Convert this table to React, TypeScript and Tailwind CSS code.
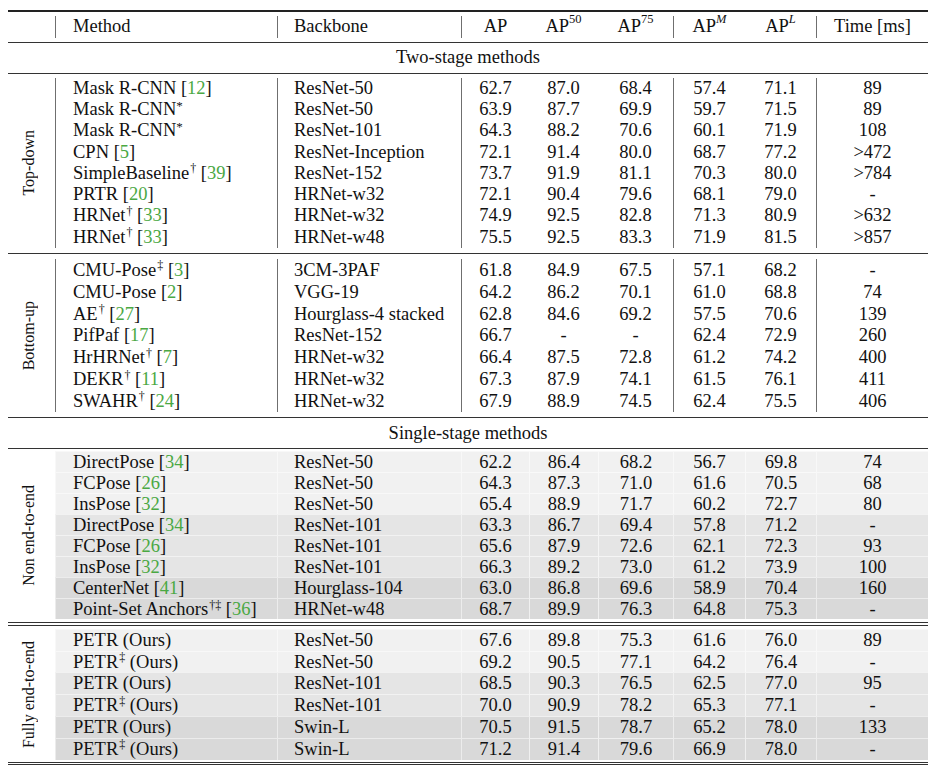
import React from "react";

type Row = {
  m: React.ReactNode;
  b: string;
  v: string[];
  bg?: string;
};

const G = ({ n }: { n: string }) => (
  <span>
    [<span className="text-[#4aa843]">{n}</span>]
  </span>
);

const Sup = ({ c }: { c: string }) => (
  <sup className="text-[12px] relative -top-[5px] leading-none ml-[1px]">{c}</sup>
);

const Star = () => (
  <sup className="text-[13px] relative -top-[4px] leading-none">*</sup>
);

const GRID =
  "grid grid-cols-[222px_184px_68px_69px_75px_72px_71px_112px]";

const VL = "border-l border-[#6f6f6f]";

function DataRow({ r, h }: { r: Row; h: string }) {
  const shaded = !!r.bg;
  const soft = shaded ? "border-l border-white/60" : "";
  const rowSep = shaded ? "border-t border-white/50" : "";
  return (
    <div className={`${GRID} ${h} ${r.bg ?? ""}`}>
      <div className={`${VL} flex items-center pl-[17px] whitespace-nowrap ${rowSep}`}>{r.m}</div>
      <div className={`${VL} flex items-center pl-[16px] whitespace-nowrap ${rowSep}`}>{r.b}</div>
      <div className={`${VL} flex items-center justify-center ${rowSep}`}>{r.v[0]}</div>
      <div className={`${soft} flex items-center justify-center ${rowSep}`}>{r.v[1]}</div>
      <div className={`${soft} flex items-center justify-center ${rowSep}`}>{r.v[2]}</div>
      <div className={`${VL} flex items-center justify-center ${rowSep}`}>{r.v[3]}</div>
      <div className={`${soft} flex items-center justify-center ${rowSep}`}>{r.v[4]}</div>
      <div className={`${VL} flex items-center justify-center ${rowSep}`}>{r.v[5]}</div>
    </div>
  );
}

function Block({
  label,
  rows,
  h,
  pad,
}: {
  label: string;
  rows: Row[];
  h: string;
  pad: string;
}) {
  return (
    <div className={`flex ${pad}`}>
      <div className="w-[47px] flex items-center justify-center pr-[5px]">
        <span className="[writing-mode:vertical-rl] rotate-180 text-[16px] leading-none whitespace-nowrap">
          {label}
        </span>
      </div>
      <div className="flex flex-col">
        {rows.map((r, i) => (
          <DataRow key={i} r={r} h={h} />
        ))}
      </div>
    </div>
  );
}

const L1 = "bg-[#f1f1f1]";
const L2 = "bg-[#e5e5e5]";
const L3 = "bg-[#d9d9d9]";

const topDown: Row[] = [
  { m: <>Mask R-CNN&nbsp;<G n="12" /></>, b: "ResNet-50", v: ["62.7", "87.0", "68.4", "57.4", "71.1", "89"] },
  { m: <>Mask R-CNN<Star /></>, b: "ResNet-50", v: ["63.9", "87.7", "69.9", "59.7", "71.5", "89"] },
  { m: <>Mask R-CNN<Star /></>, b: "ResNet-101", v: ["64.3", "88.2", "70.6", "60.1", "71.9", "108"] },
  { m: <>CPN&nbsp;<G n="5" /></>, b: "ResNet-Inception", v: ["72.1", "91.4", "80.0", "68.7", "77.2", ">472"] },
  { m: <>SimpleBaseline<Sup c="†" />&nbsp;<G n="39" /></>, b: "ResNet-152", v: ["73.7", "91.9", "81.1", "70.3", "80.0", ">784"] },
  { m: <>PRTR&nbsp;<G n="20" /></>, b: "HRNet-w32", v: ["72.1", "90.4", "79.6", "68.1", "79.0", "-"] },
  { m: <>HRNet<Sup c="†" />&nbsp;<G n="33" /></>, b: "HRNet-w32", v: ["74.9", "92.5", "82.8", "71.3", "80.9", ">632"] },
  { m: <>HRNet<Sup c="†" />&nbsp;<G n="33" /></>, b: "HRNet-w48", v: ["75.5", "92.5", "83.3", "71.9", "81.5", ">857"] },
];

const bottomUp: Row[] = [
  { m: <>CMU-Pose<Sup c="‡" />&nbsp;<G n="3" /></>, b: "3CM-3PAF", v: ["61.8", "84.9", "67.5", "57.1", "68.2", "-"] },
  { m: <>CMU-Pose&nbsp;<G n="2" /></>, b: "VGG-19", v: ["64.2", "86.2", "70.1", "61.0", "68.8", "74"] },
  { m: <>AE<Sup c="†" />&nbsp;<G n="27" /></>, b: "Hourglass-4 stacked", v: ["62.8", "84.6", "69.2", "57.5", "70.6", "139"] },
  { m: <>PifPaf&nbsp;<G n="17" /></>, b: "ResNet-152", v: ["66.7", "-", "-", "62.4", "72.9", "260"] },
  { m: <>HrHRNet<Sup c="†" />&nbsp;<G n="7" /></>, b: "HRNet-w32", v: ["66.4", "87.5", "72.8", "61.2", "74.2", "400"] },
  { m: <>DEKR<Sup c="†" />&nbsp;<G n="11" /></>, b: "HRNet-w32", v: ["67.3", "87.9", "74.1", "61.5", "76.1", "411"] },
  { m: <>SWAHR<Sup c="†" />&nbsp;<G n="24" /></>, b: "HRNet-w32", v: ["67.9", "88.9", "74.5", "62.4", "75.5", "406"] },
];

const nonE2E: Row[] = [
  { m: <>DirectPose&nbsp;<G n="34" /></>, b: "ResNet-50", v: ["62.2", "86.4", "68.2", "56.7", "69.8", "74"], bg: L1 },
  { m: <>FCPose&nbsp;<G n="26" /></>, b: "ResNet-50", v: ["64.3", "87.3", "71.0", "61.6", "70.5", "68"], bg: L1 },
  { m: <>InsPose&nbsp;<G n="32" /></>, b: "ResNet-50", v: ["65.4", "88.9", "71.7", "60.2", "72.7", "80"], bg: L1 },
  { m: <>DirectPose&nbsp;<G n="34" /></>, b: "ResNet-101", v: ["63.3", "86.7", "69.4", "57.8", "71.2", "-"], bg: L2 },
  { m: <>FCPose&nbsp;<G n="26" /></>, b: "ResNet-101", v: ["65.6", "87.9", "72.6", "62.1", "72.3", "93"], bg: L2 },
  { m: <>InsPose&nbsp;<G n="32" /></>, b: "ResNet-101", v: ["66.3", "89.2", "73.0", "61.2", "73.9", "100"], bg: L2 },
  { m: <>CenterNet&nbsp;<G n="41" /></>, b: "Hourglass-104", v: ["63.0", "86.8", "69.6", "58.9", "70.4", "160"], bg: L3 },
  { m: <>Point-Set Anchors<Sup c="†‡" />&nbsp;<G n="36" /></>, b: "HRNet-w48", v: ["68.7", "89.9", "76.3", "64.8", "75.3", "-"], bg: L3 },
];

const fullE2E: Row[] = [
  { m: <>PETR (Ours)</>, b: "ResNet-50", v: ["67.6", "89.8", "75.3", "61.6", "76.0", "89"], bg: L1 },
  { m: <>PETR<Sup c="‡" />&nbsp;(Ours)</>, b: "ResNet-50", v: ["69.2", "90.5", "77.1", "64.2", "76.4", "-"], bg: L1 },
  { m: <>PETR (Ours)</>, b: "ResNet-101", v: ["68.5", "90.3", "76.5", "62.5", "77.0", "95"], bg: L2 },
  { m: <>PETR<Sup c="‡" />&nbsp;(Ours)</>, b: "ResNet-101", v: ["70.0", "90.9", "78.2", "65.3", "77.1", "-"], bg: L2 },
  { m: <>PETR (Ours)</>, b: "Swin-L", v: ["70.5", "91.5", "78.7", "65.2", "78.0", "133"], bg: L3 },
  { m: <>PETR<Sup c="‡" />&nbsp;(Ours)</>, b: "Swin-L", v: ["71.2", "91.4", "79.6", "66.9", "78.0", "-"], bg: L3 },
];

const Rule = () => <div className="h-px bg-[#333]" />;
const DoubleRule = () => (
  <div className="flex flex-col">
    <div className="h-px bg-[#333]" />
    <div className="h-[1.5px]" />
    <div className="h-px bg-[#333]" />
  </div>
);

const HSup = ({ c, it }: { c: string; it?: boolean }) => (
  <sup className={`text-[12.5px] relative -top-[7px] leading-none ${it ? "italic" : ""}`}>{c}</sup>
);

export default function App() {
  return (
    <div className="w-[936px] h-[772px] bg-white font-['Liberation_Serif',serif] text-[18.5px] text-[#111] leading-[21px]">
      <div className="pt-[10px] pl-[8px] w-[928px]">
        <div className="h-[1.5px] bg-[#222]" />
        {/* header */}
        <div className="flex py-[4px]">
          <div className="w-[47px]" />
          <div className={`${GRID} h-[22px]`}>
            <div className={`${VL} flex items-center pl-[17px]`}>Method</div>
            <div className={`${VL} flex items-center pl-[16px]`}>Backbone</div>
            <div className={`${VL} flex items-center justify-center`}>AP</div>
            <div className="flex items-center justify-center">AP<HSup c="50" /></div>
            <div className="flex items-center justify-center">AP<HSup c="75" /></div>
            <div className={`${VL} flex items-center justify-center`}>AP<HSup c="M" it /></div>
            <div className="flex items-center justify-center">AP<HSup c="L" it /></div>
            <div className={`${VL} flex items-center justify-center`}>Time [ms]</div>
          </div>
        </div>
        <Rule />
        <div className="h-[30px] flex items-center justify-center">Two-stage methods</div>
        <Rule />
        <Block label="Top-down" rows={topDown} h="h-[21.3px]" pad="pt-[4px] pb-[5.6px]" />
        <Rule />
        <Block label="Bottom-up" rows={bottomUp} h="h-[21.85px]" pad="pt-[5px] pb-[5px]" />
        <Rule />
        <div className="h-[30px] flex items-center justify-center">Single-stage methods</div>
        <Rule />
        <Block label="Non end-to-end" rows={nonE2E} h="h-[21px]" pad="pt-[2px] pb-[3px]" />
        <DoubleRule />
        <Block label="Fully end-to-end" rows={fullE2E} h="h-[21.8px]" pad="pt-[3px] pb-[2px]" />
        <DoubleRule />
      </div>
    </div>
  );
}
